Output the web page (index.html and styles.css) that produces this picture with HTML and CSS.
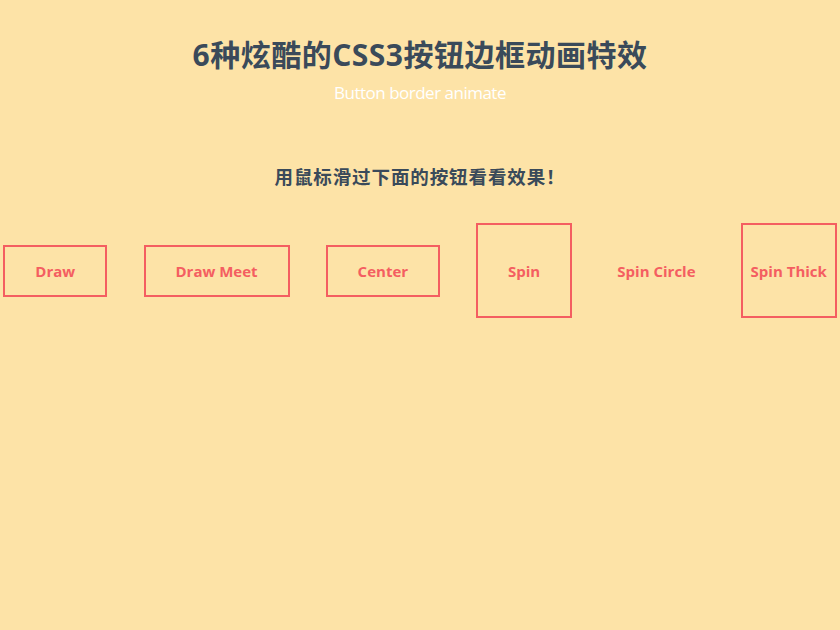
FILE: index.html
```html
<!DOCTYPE html>
<html lang="zh-CN">
<head>
<meta charset="utf-8">
<title>6种炫酷的CSS3按钮边框动画特效</title>
<link rel="stylesheet" href="styles.css">
</head>
<body>
<header class="header">
  <h1 class="title">6种炫酷的CSS3按钮边框动画特效</h1>
  <p class="subtitle">Button border animate</p>
</header>
<h2 class="hint">用鼠标滑过下面的按钮看看效果！</h2>
<div class="buttons">
  <button class="btn btn-draw">Draw</button>
  <button class="btn btn-meet">Draw Meet</button>
  <button class="btn btn-center">Center</button>
  <button class="btn btn-spin">Spin</button>
  <button class="btn btn-spin btn-circle">Spin Circle</button>
  <button class="btn btn-spin">Spin Thick</button>
</div>
</body>
</html>
```
FILE: styles.css
```css
html, body {
  margin: 0;
  padding: 0;
}
body {
  background: #fde3a7;
  font-family: "Open Sans", "Noto Sans CJK SC", sans-serif;
  color: #3b4a59;
  height: 630px;
}
.header {
  text-align: center;
  padding-top: 37px;
}
.title {
  margin: 0;
  font-size: 30px;
  line-height: 36px;
  font-weight: bold;
  font-family: "Open Sans", "Noto Sans CJK SC", sans-serif;
  letter-spacing: 0.5px;
  color: #3a4a5a;
}
.subtitle {
  margin: 10px 0 0;
  font-size: 17px;
  line-height: 20px;
  color: #ffffff;
  font-family: "Open Sans", sans-serif;
  letter-spacing: -0.5px;
}
.hint {
  margin: 61px 0 0;
  text-align: center;
  font-size: 18.5px;
  line-height: 24px;
  font-weight: bold;
  font-family: "Noto Sans CJK SC", sans-serif;
  letter-spacing: 0.9px;
  color: #3a4a5a;
}
.buttons {
  margin-top: 35px;
  display: flex;
  justify-content: center;
  align-items: center;
  gap: 36.3px;
}
.btn {
  flex: none;
  box-sizing: border-box;
  background: transparent;
  border: 2px solid #f45e61;
  color: #f45e61;
  font-family: "Open Sans", sans-serif;
  font-weight: bold;
  font-size: 15px;
  line-height: 19px;
  padding: 15px 0 13px;
  margin: 0;
  height: 52px;
}
.btn-draw { width: 104px; }
.btn-meet { width: 146px; }
.btn-center { width: 114px; }
.btn-spin {
  width: 96px;
  height: 95px;
  padding: 2px 0 0;
  display: flex;
  align-items: center;
  justify-content: center;
  white-space: nowrap;
}
.btn-circle {
  border-color: transparent;
}
```
